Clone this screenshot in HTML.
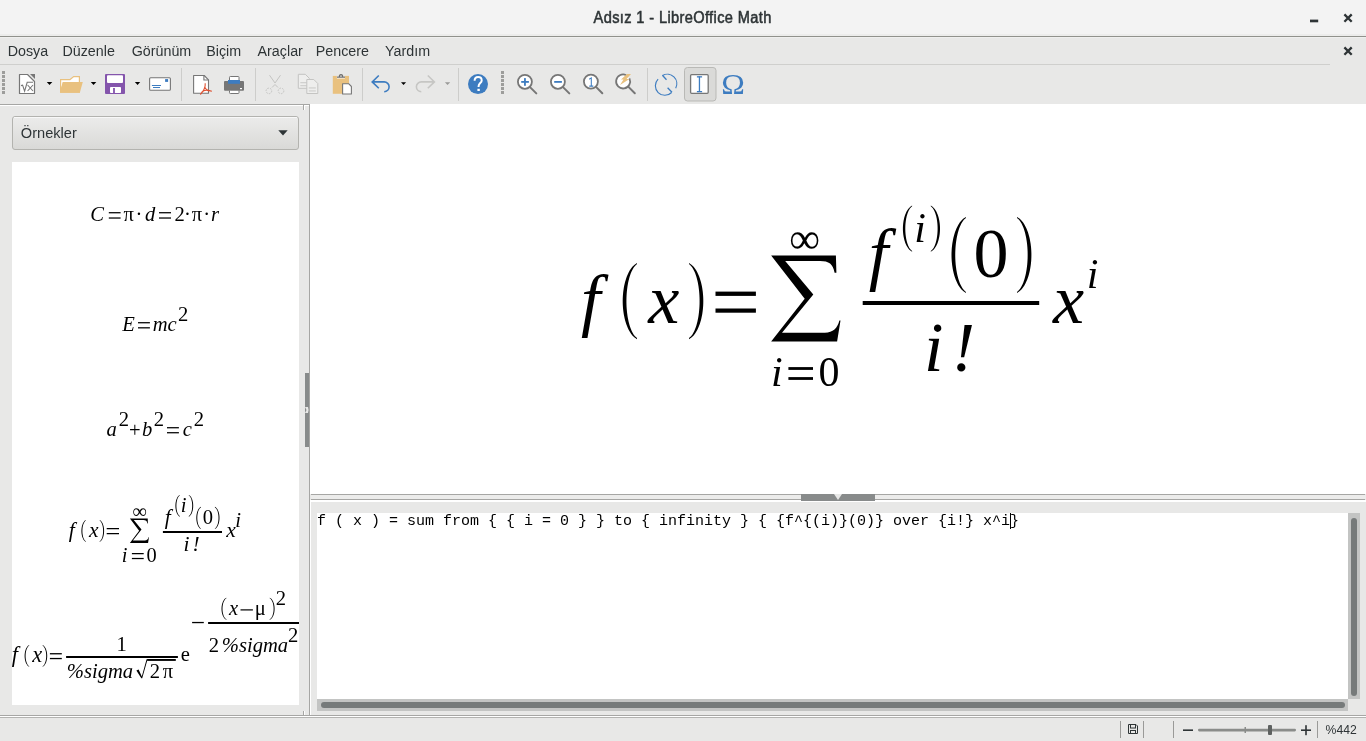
<!DOCTYPE html>
<html><head><meta charset="utf-8"><style>
html,body{margin:0;padding:0;background:#e8e8e7;width:1366px;height:741px;overflow:hidden}
svg{display:block;will-change:transform}
</style></head><body>
<svg width="1366" height="741" viewBox="0 0 1366 741">
<rect x="0" y="0" width="1366" height="741" fill="#e8e8e7"/>
<rect x="0" y="0" width="1366" height="34" fill="#f3f3f3" />
<rect x="0" y="34" width="1366" height="2" fill="#ececeb" />
<rect x="0" y="36" width="1366" height="1" fill="#90918c" />
<rect x="0" y="37" width="1366" height="1" fill="#efefee" />
<text x="0" y="0" transform="translate(593.6,23) scale(1,1.08)" font-family="Liberation Sans" font-size="14.6" letter-spacing="0.37" fill="#2e3436" stroke="#2e3436" stroke-width="0.5">Adsız 1 - LibreOffice Math</text>
<rect x="1310" y="19.6" width="8.2" height="2.7" fill="#2e3436" />
<path d="M1344.4 14.4 L1351.7 21.7 M1351.7 14.4 L1344.4 21.7" stroke="#2e3436" stroke-width="2.3"/>
<text x="0" y="0" transform="translate(7.63,56) scale(1,1.08)" font-family="Liberation Sans" font-size="14.3" font-weight="normal" fill="#2e3436">Dosya</text>
<text x="0" y="0" transform="translate(62.43,56) scale(1,1.08)" font-family="Liberation Sans" font-size="14.3" font-weight="normal" fill="#2e3436">Düzenle</text>
<text x="0" y="0" transform="translate(131.68,56) scale(1,1.08)" font-family="Liberation Sans" font-size="14.3" font-weight="normal" fill="#2e3436">Görünüm</text>
<text x="0" y="0" transform="translate(206.23,56) scale(1,1.08)" font-family="Liberation Sans" font-size="14.3" font-weight="normal" fill="#2e3436">Biçim</text>
<text x="0" y="0" transform="translate(257.57,56) scale(1,1.08)" font-family="Liberation Sans" font-size="14.3" font-weight="normal" fill="#2e3436">Araçlar</text>
<text x="0" y="0" transform="translate(315.73,56) scale(1,1.08)" font-family="Liberation Sans" font-size="14.3" font-weight="normal" fill="#2e3436">Pencere</text>
<text x="0" y="0" transform="translate(385.09,56) scale(1,1.08)" font-family="Liberation Sans" font-size="14.3" font-weight="normal" fill="#2e3436">Yardım</text>
<path d="M1344.4 47.4 L1351.7 54.7 M1351.7 47.4 L1344.4 54.7" stroke="#2e3436" stroke-width="2.3"/>
<rect x="0" y="64" width="1330" height="1" fill="#cfcfcd" />
<rect x="0" y="104" width="310" height="1" fill="#a6a6a4" />
<rect x="0" y="105" width="309" height="1" fill="#ffffff" />
<rect x="2" y="71" width="3" height="3" fill="#9d9d9b" />
<rect x="2" y="75" width="3" height="3" fill="#9d9d9b" />
<rect x="2" y="79" width="3" height="3" fill="#9d9d9b" />
<rect x="2" y="83" width="3" height="3" fill="#9d9d9b" />
<rect x="2" y="87" width="3" height="3" fill="#9d9d9b" />
<rect x="2" y="91" width="3" height="3" fill="#9d9d9b" />
<path d="M19.5 74.5 H27.5 L34.5 81.5 V93.5 H19.5 Z" fill="#fff" stroke="#767676" stroke-width="1.2" stroke-linejoin="round"/>
<path d="M30 74 H35 V79 Z" fill="#767676"/>
<path d="M21 85.6 L22.6 85.2 L24.6 91.2 L27.2 82.3 H33" fill="none" stroke="#767676" stroke-width="1.1"/>
<path d="M27.6 85 L33 91 M33 85 L27.6 91" stroke="#767676" stroke-width="1.1"/>
<path d="M46.8 82 L52.3 82 L49.55 85 Z" fill="#000"/>
<path d="M60 79 H69.8 L73.4 76 H80 V92.8 H60 Z" fill="#e9c17f"/>
<path d="M61.2 80.2 H70.2 L73.8 77.2 H78.8 V82 H62.8 L61.2 88 Z" fill="#fff"/>
<path d="M62.9 82 H82.8 L79.8 92.8 H60 Z" fill="#e9c17f"/>
<path d="M90.8 82 L96.3 82 L93.55 85 Z" fill="#000"/>
<rect x="105" y="74" width="20" height="20" rx="1" fill="#8455ac"/>
<rect x="107" y="75.2" width="16" height="7.7" rx="1" fill="#fff"/>
<rect x="110" y="86.9" width="11" height="6.1" rx="0.8" fill="#fff"/>
<rect x="113.1" y="88" width="1.8" height="6" fill="#8455ac" />
<path d="M134.9 82 L140.20000000000002 82 L137.55 85 Z" fill="#000"/>
<rect x="149.6" y="77.8" width="20.8" height="12.4" rx="1" fill="#fff" stroke="#767676" stroke-width="1.1"/>
<rect x="165.1" y="79.1" width="3" height="2.8" fill="#3d7cc0" />
<rect x="151.9" y="85" width="9.1" height="1" fill="#3d7cc0" />
<rect x="153" y="87" width="7" height="1" fill="#3d7cc0" />
<rect x="181" y="68" width="1" height="33" fill="#cdcdcb" />
<path d="M193.6 75.5 H204.2 L208.5 79.8 V93.3 H193.6 Z" fill="#fff" stroke="#767676" stroke-width="1.1" stroke-linejoin="round"/>
<path d="M203.9 75.5 V80 H208.5" fill="none" stroke="#767676" stroke-width="1.1"/>
<path d="M205.2 83.2 C205.6 87 203.6 91 200.3 94.5 M205 87.5 C205.8 90 208.5 90.8 211.9 91.2 M201.5 92.5 C204 90 206.5 89.8 209 91" fill="none" stroke="#df5030" stroke-width="1.1"/>
<rect x="229.5" y="76.5" width="9.5" height="6" rx="0.8" fill="#fff" stroke="#767676" stroke-width="1"/>
<rect x="228" y="80" width="12" height="3.8" fill="#3d7cc0" />
<rect x="224" y="81" width="20" height="9.7" rx="1" fill="#767676"/>
<rect x="228" y="80" width="12" height="3.8" fill="#3d7cc0" />
<rect x="229.5" y="90.2" width="9.5" height="3.3" rx="0.8" fill="#fff" stroke="#767676" stroke-width="1"/>
<rect x="240" y="88" width="2" height="1.2" fill="#fff" />
<rect x="255" y="68" width="1" height="33" fill="#cdcdcb" />
<path d="M269.5 75.2 L275 83 L280.5 75.2 M272 87.5 L275 84.5 L278 87.5" fill="none" stroke="#c4c4c2" stroke-width="1"/>
<circle cx="268.9" cy="90.9" r="2.8" fill="none" stroke="#c4c4c2" stroke-width="1" stroke-dasharray="1.6 1.2"/>
<circle cx="281" cy="90.9" r="2.8" fill="none" stroke="#c4c4c2" stroke-width="1" stroke-dasharray="1.6 1.2"/>
<path d="M298.3 74.3 H305.3 L309.3 78.3 V88.3 H298.3 Z" fill="#eeeeed" stroke="#c4c4c2" stroke-width="1" stroke-linejoin="round"/>
<rect x="300.3" y="82.3" width="7" height="0.9" fill="#c4c4c2" />
<rect x="300.3" y="85.3" width="7" height="0.9" fill="#c4c4c2" />
<path d="M306.8 79.5 H313.8 L317.8 83.5 V93.5 H306.8 Z" fill="#eeeeed" stroke="#c4c4c2" stroke-width="1" stroke-linejoin="round"/>
<rect x="308.8" y="87.5" width="7" height="0.9" fill="#c4c4c2" />
<rect x="308.8" y="90.5" width="7" height="0.9" fill="#c4c4c2" />
<rect x="332.8" y="75.9" width="16.2" height="17.9" fill="#e9c17f"/>
<rect x="336.9" y="75.9" width="8" height="2.6" fill="#fff" />
<path d="M337 77.2 H345 M339.3 77 C339.3 73.8 342.7 73.8 342.7 77" fill="none" stroke="#6d6d6d" stroke-width="1.2"/>
<path d="M342.6 83.7 H348.6 L351.4 86.5 V94 H342.6 Z" fill="#fff" stroke="#767676" stroke-width="1.1" stroke-linejoin="round"/>
<rect x="362" y="68" width="1" height="33" fill="#cdcdcb" />
<path d="M378.8 75.5 L372.2 81.9 L378.8 88.3 M372.4 81.9 H384.2 A4.9 4.9 0 0 1 384.2 91.7" fill="none" stroke="#3d7cc0" stroke-width="1.6" stroke-linejoin="miter"/>
<path d="M401 82.2 L406.1 82.2 L403.55 85.0 Z" fill="#000"/>
<path d="M427.8 75.5 L434.4 81.9 L427.8 88.3 M434.2 81.9 H421.3 A4.9 4.9 0 0 0 421.3 91.7" fill="none" stroke="#c6c6c4" stroke-width="1.6"/>
<path d="M444.9 82.2 L450.2 82.2 L447.54999999999995 85.0 Z" fill="#9a9a98"/>
<rect x="458" y="68" width="1" height="33" fill="#cdcdcb" />
<circle cx="478" cy="84.1" r="10" fill="#3d7cc0"/>
<path d="M474.6 80.8 C474.6 78.3 476.2 77.1 478.1 77.1 C480.3 77.1 481.7 78.5 481.7 80.4 C481.7 82.9 478.6 83.3 478.6 86.2 V87" fill="none" stroke="#fff" stroke-width="2"/>
<rect x="477.4" y="88.8" width="2.4" height="2.2" fill="#fff" />
<rect x="501" y="71" width="3" height="3" fill="#9d9d9b" />
<rect x="501" y="75" width="3" height="3" fill="#9d9d9b" />
<rect x="501" y="79" width="3" height="3" fill="#9d9d9b" />
<rect x="501" y="83" width="3" height="3" fill="#9d9d9b" />
<rect x="501" y="87" width="3" height="3" fill="#9d9d9b" />
<rect x="501" y="91" width="3" height="3" fill="#9d9d9b" />
<circle cx="524.9" cy="81.8" r="7" fill="#fff" stroke="#767676" stroke-width="1.8"/>
<path d="M530.0 87.1 L536.3 93.39999999999999" stroke="#767676" stroke-width="2" stroke-linecap="round"/>
<rect x="521.2" y="81" width="7.7" height="1.8" fill="#3d7cc0" />
<rect x="524.05" y="78.1" width="1.8" height="7.7" fill="#3d7cc0" />
<circle cx="557.9" cy="81.8" r="7" fill="#fff" stroke="#767676" stroke-width="1.8"/>
<path d="M563.0 87.1 L569.3 93.39999999999999" stroke="#767676" stroke-width="2" stroke-linecap="round"/>
<rect x="554.2" y="81" width="7.7" height="1.8" fill="#3d7cc0" />
<circle cx="590.9" cy="81.6" r="7" fill="#fff" stroke="#767676" stroke-width="1.8"/>
<path d="M596.0 86.89999999999999 L602.3 93.19999999999999" stroke="#767676" stroke-width="2" stroke-linecap="round"/>
<path d="M589.2 79.2 L591.3 77.9 V86.1 M589.3 86.1 H593.3" fill="none" stroke="#3d7cc0" stroke-width="1.05"/>
<path d="M629.4 78.4 A7 7 0 1 1 626.2 75.2" fill="#fff" stroke="#767676" stroke-width="1.8"/>
<path d="M628.5 86.9 L634.8 93.2" stroke="#767676" stroke-width="2" stroke-linecap="round"/>
<path d="M627 74 L631 74 L626.5 79 L629.5 79 L620 85 L623.5 79.5 L621 79.5 Z" fill="#e9c17f"/>
<rect x="647" y="68" width="1" height="33" fill="#cdcdcb" />
<path d="M662.6 75.5 A9.5 9.5 0 0 1 675.7 88.2 M671.6 92.5 A9.5 9.5 0 0 1 658.1 79.1" fill="none" stroke="#3d7cc0" stroke-width="1.15"/>
<path d="M662.4 75.3 L666.5 79.7 M667.6 87.8 L672 92.2" stroke="#3d7cc0" stroke-width="1.3"/>
<rect x="684.5" y="67.5" width="31.5" height="33.5" rx="3" fill="#dadad8" stroke="#b9b9b6"/>
<rect x="690.6" y="74.7" width="17.6" height="18.6" rx="1" fill="#fff" stroke="#767676" stroke-width="1.3"/>
<rect x="698.8" y="76.4" width="1.3" height="15.4" fill="#3d7cc0" />
<rect x="696.9" y="76.2" width="5.2" height="1.3" fill="#3d7cc0" />
<rect x="696.9" y="91" width="5.2" height="1.3" fill="#3d7cc0" />
<text x="0" y="0" font-family="Liberation Serif" font-size="30.21" fill="#3d7cc0" transform="translate(721.16,94) scale(1.0506,1)" >Ω</text>
<rect x="309" y="104" width="1" height="612" fill="#a6a6a4" />
<rect x="303" y="104" width="1" height="6" fill="#a6a6a4" />
<rect x="304" y="105" width="1" height="5" fill="#ffffff" />
<defs><linearGradient id="btn" x1="0" y1="0" x2="0" y2="1"><stop offset="0" stop-color="#ececeb"/><stop offset="1" stop-color="#d9d9d7"/></linearGradient></defs>
<rect x="12.5" y="116.5" width="286" height="33" rx="2.5" fill="url(#btn)" stroke="#b3b3af"/>
<rect x="14" y="117" width="283" height="1" fill="#f8f8f8" />
<text x="0" y="0" transform="translate(20.81,138) scale(1,1.03)" font-family="Liberation Sans" font-size="14.6" font-weight="normal" fill="#2e3436">Örnekler</text>
<path d="M278.3 130.3 L287.7 130.3 L283 135.6 Z" fill="#2e3436"/>
<rect x="12" y="162" width="287" height="543" fill="#ffffff" />
<rect x="305" y="373" width="4" height="74" fill="#888b8b" />
<path d="M305 407 L308 407 L308.6 410 L308 413 L305 413 L306.5 410 Z" fill="#e8e8e7"/>
<rect x="310" y="104" width="1056" height="390" fill="#ffffff" />
<rect x="311" y="494" width="1054" height="1" fill="#a6a6a4" />
<rect x="311" y="495" width="1055" height="4" fill="#ececeb" />
<rect x="311" y="499" width="1054" height="1" fill="#a6a6a4" />
<rect x="311" y="500" width="1055" height="2" fill="#ffffff" />
<rect x="310" y="500" width="1" height="215" fill="#ffffff" />
<rect x="801" y="494" width="74" height="7" fill="#888b8b" />
<path d="M834 494 L842 494 L838 500 Z" fill="#e8e8e7"/>
<rect x="317" y="513" width="1031" height="186" fill="#ffffff" />
<rect x="1348" y="513" width="12" height="186" fill="#c3c4c3" />
<rect x="1351" y="518" width="6" height="178" rx="3" fill="#767a7a"/>
<rect x="317" y="699" width="1031" height="12" fill="#c3c4c3" />
<rect x="321" y="702" width="1024" height="6" rx="3" fill="#767a7a"/>
<text x="317" y="525" font-family="Liberation Mono" font-size="15" font-weight="normal" font-style="normal" fill="#000000" xml:space="preserve">f ( x ) = sum from { { i = 0 } } to { infinity } { {f^{(i)}(0)} over {i!} x^i}</text>
<rect x="1010" y="513" width="1" height="16" fill="#000" />
<rect x="0" y="715" width="1366" height="1" fill="#a6a6a4" />
<rect x="0" y="716" width="1366" height="1" fill="#ffffff" />
<rect x="0" y="717" width="1366" height="1" fill="#b3b3b1" />
<rect x="303" y="711" width="1" height="4" fill="#a6a6a4" />
<rect x="304" y="711" width="1" height="4" fill="#ffffff" />
<rect x="1120" y="721" width="1" height="17" fill="#9a9a98" />
<rect x="1143" y="721" width="1" height="17" fill="#9a9a98" />
<rect x="1173" y="721" width="1" height="17" fill="#9a9a98" />
<rect x="1317" y="721" width="1" height="17" fill="#9a9a98" />
<text x="0" y="0" transform="translate(1325.57,734) scale(1,1.05)" font-family="Liberation Sans" font-size="12.2" font-weight="normal" fill="#2e3436">%442</text>
<path d="M1128.5 724.5 H1136 L1137.5 726 V733.5 H1128.5 Z" fill="none" stroke="#2e3436" stroke-width="1"/>
<rect x="1130.5" y="724.5" width="5" height="3.5" fill="none" stroke="#2e3436" stroke-width="1"/>
<rect x="1130.5" y="730.5" width="5" height="3" fill="none" stroke="#2e3436" stroke-width="1"/>
<rect x="1183" y="729.4" width="10" height="1.6" fill="#2e3436" />
<rect x="1198" y="728.8" width="98" height="2.6" rx="1.3" fill="#8a8c8a"/>
<rect x="1244.5" y="727" width="1.5" height="6" fill="#8a8c8a" />
<rect x="1268" y="725" width="4" height="10" rx="1" fill="#5e6160"/>
<rect x="1301" y="729.4" width="10" height="1.6" fill="#2e3436" />
<rect x="1305.2" y="725.2" width="1.6" height="10" fill="#2e3436" />
<text x="581.11" y="323" font-family="Liberation Serif" font-size="70" font-weight="normal" font-style="italic" fill="#000" >f</text>
<path d="M637.00 263.00 L634.24 264.90 L632.36 266.81 L630.88 268.71 L629.66 270.62 L628.62 272.52 L627.71 274.43 L626.92 276.33 L626.22 278.24 L625.61 280.14 L625.06 282.05 L624.59 283.95 L624.18 285.86 L623.82 287.76 L623.52 289.67 L623.26 291.57 L623.06 293.48 L622.90 295.38 L622.79 297.29 L622.72 299.19 L622.70 301.10 L622.72 303.00 L622.79 304.91 L622.90 306.81 L623.06 308.72 L623.26 310.62 L623.52 312.53 L623.82 314.44 L624.18 316.34 L624.59 318.25 L625.06 320.15 L625.61 322.06 L626.22 323.96 L626.92 325.87 L627.71 327.77 L628.62 329.68 L629.66 331.58 L630.88 333.49 L632.36 335.39 L634.24 337.30 L637.00 339.20 L637.00 338.08 L634.97 336.24 L633.58 334.39 L632.49 332.54 L631.58 330.69 L630.81 328.84 L630.13 326.99 L629.55 325.14 L629.03 323.29 L628.57 321.44 L628.17 319.59 L627.82 317.74 L627.51 315.89 L627.25 314.04 L627.02 312.20 L626.84 310.35 L626.68 308.50 L626.57 306.65 L626.48 304.80 L626.43 302.95 L626.42 301.10 L626.43 299.25 L626.48 297.40 L626.57 295.55 L626.68 293.70 L626.84 291.85 L627.02 290.00 L627.25 288.16 L627.51 286.31 L627.82 284.46 L628.17 282.61 L628.57 280.76 L629.03 278.91 L629.55 277.06 L630.13 275.21 L630.81 273.36 L631.58 271.51 L632.49 269.66 L633.58 267.81 L634.97 265.96 L637.00 264.12 Z" fill="#000"/>
<text x="648.25" y="323" font-family="Liberation Serif" font-size="70" font-weight="normal" font-style="italic" fill="#000" >x</text>
<path d="M689.00 263.00 L691.76 264.90 L693.64 266.81 L695.12 268.71 L696.34 270.62 L697.38 272.52 L698.29 274.43 L699.08 276.33 L699.78 278.24 L700.39 280.14 L700.94 282.05 L701.41 283.95 L701.82 285.86 L702.18 287.76 L702.48 289.67 L702.74 291.57 L702.94 293.48 L703.10 295.38 L703.21 297.29 L703.28 299.19 L703.30 301.10 L703.28 303.00 L703.21 304.91 L703.10 306.81 L702.94 308.72 L702.74 310.62 L702.48 312.53 L702.18 314.44 L701.82 316.34 L701.41 318.25 L700.94 320.15 L700.39 322.06 L699.78 323.96 L699.08 325.87 L698.29 327.77 L697.38 329.68 L696.34 331.58 L695.12 333.49 L693.64 335.39 L691.76 337.30 L689.00 339.20 L689.00 338.08 L691.03 336.24 L692.42 334.39 L693.51 332.54 L694.42 330.69 L695.19 328.84 L695.87 326.99 L696.45 325.14 L696.97 323.29 L697.43 321.44 L697.83 319.59 L698.18 317.74 L698.49 315.89 L698.75 314.04 L698.98 312.20 L699.16 310.35 L699.32 308.50 L699.43 306.65 L699.52 304.80 L699.57 302.95 L699.58 301.10 L699.57 299.25 L699.52 297.40 L699.43 295.55 L699.32 293.70 L699.16 291.85 L698.98 290.00 L698.75 288.16 L698.49 286.31 L698.18 284.46 L697.83 282.61 L697.43 280.76 L696.97 278.91 L696.45 277.06 L695.87 275.21 L695.19 273.36 L694.42 271.51 L693.51 269.66 L692.42 267.81 L691.03 265.96 L689.00 264.12 Z" fill="#000"/>
<rect x="715.5" y="291.6" width="40.4" height="4.3" fill="#000" />
<rect x="715.5" y="308.5" width="40.4" height="4.2" fill="#000" />
<path d="M771.15 255.4 L835.9 255.4 L836.4 272.8 L834.6 272.8 C833 264 829 261 820 261 L785.2 261 L813.3 294.6 L782 332.7 L824.9 332.7 C833 332.7 837.5 328 839.4 320.5 L840.5 320.5 L837.1 341.6 L771.15 341.6 L804.7 298.7 Z" fill="#000"/>
<text x="789.28" y="252.77777777777777" font-family="Liberation Serif" font-size="43.157088122605366" font-weight="normal" font-style="normal" fill="#000" >∞</text>
<text x="770.96" y="385.8" font-family="Liberation Serif" font-size="42" font-weight="normal" font-style="italic" fill="#000" >i</text>
<rect x="788.4" y="367.1" width="24.6" height="2.8" fill="#000" />
<rect x="788.4" y="377.1" width="24.6" height="2.8" fill="#000" />
<text x="818.60" y="386.22" font-family="Liberation Serif" font-size="42" font-weight="normal" font-style="normal" fill="#000" >0</text>
<text x="868.81" y="277" font-family="Liberation Serif" font-size="70" font-weight="normal" font-style="italic" fill="#000" >f</text>
<path d="M912.10 205.60 L910.32 206.75 L909.12 207.91 L908.17 209.06 L907.38 210.21 L906.71 211.36 L906.12 212.51 L905.61 213.67 L905.16 214.82 L904.77 215.97 L904.42 217.12 L904.12 218.28 L903.85 219.43 L903.62 220.58 L903.42 221.73 L903.26 222.89 L903.13 224.04 L903.03 225.19 L902.96 226.34 L902.91 227.50 L902.90 228.65 L902.91 229.80 L902.96 230.95 L903.03 232.11 L903.13 233.26 L903.26 234.41 L903.42 235.56 L903.62 236.72 L903.85 237.87 L904.12 239.02 L904.42 240.18 L904.77 241.33 L905.16 242.48 L905.61 243.63 L906.12 244.78 L906.71 245.94 L907.38 247.09 L908.17 248.24 L909.12 249.39 L910.32 250.55 L912.10 251.70 L912.10 250.98 L910.79 249.87 L909.90 248.75 L909.20 247.63 L908.61 246.52 L908.12 245.40 L907.68 244.28 L907.31 243.17 L906.97 242.05 L906.68 240.93 L906.42 239.82 L906.19 238.70 L906.00 237.58 L905.83 236.47 L905.68 235.35 L905.56 234.23 L905.46 233.12 L905.39 232.00 L905.33 230.88 L905.30 229.77 L905.29 228.65 L905.30 227.53 L905.33 226.42 L905.39 225.30 L905.46 224.18 L905.56 223.07 L905.68 221.95 L905.83 220.83 L906.00 219.72 L906.19 218.60 L906.42 217.48 L906.68 216.37 L906.97 215.25 L907.31 214.13 L907.68 213.02 L908.12 211.90 L908.61 210.78 L909.20 209.67 L909.90 208.55 L910.79 207.43 L912.10 206.32 Z" fill="#000"/>
<text x="914.36" y="242" font-family="Liberation Serif" font-size="42" font-weight="normal" font-style="italic" fill="#000" >i</text>
<path d="M930.80 205.60 L932.58 206.75 L933.78 207.91 L934.73 209.06 L935.52 210.21 L936.19 211.36 L936.78 212.51 L937.29 213.67 L937.74 214.82 L938.13 215.97 L938.48 217.12 L938.78 218.28 L939.05 219.43 L939.28 220.58 L939.48 221.73 L939.64 222.89 L939.77 224.04 L939.87 225.19 L939.94 226.34 L939.99 227.50 L940.00 228.65 L939.99 229.80 L939.94 230.95 L939.87 232.11 L939.77 233.26 L939.64 234.41 L939.48 235.56 L939.28 236.72 L939.05 237.87 L938.78 239.02 L938.48 240.18 L938.13 241.33 L937.74 242.48 L937.29 243.63 L936.78 244.78 L936.19 245.94 L935.52 247.09 L934.73 248.24 L933.78 249.39 L932.58 250.55 L930.80 251.70 L930.80 250.98 L932.11 249.87 L933.00 248.75 L933.70 247.63 L934.29 246.52 L934.78 245.40 L935.22 244.28 L935.59 243.17 L935.93 242.05 L936.22 240.93 L936.48 239.82 L936.71 238.70 L936.90 237.58 L937.07 236.47 L937.22 235.35 L937.34 234.23 L937.44 233.12 L937.51 232.00 L937.57 230.88 L937.60 229.77 L937.61 228.65 L937.60 227.53 L937.57 226.42 L937.51 225.30 L937.44 224.18 L937.34 223.07 L937.22 221.95 L937.07 220.83 L936.90 219.72 L936.71 218.60 L936.48 217.48 L936.22 216.37 L935.93 215.25 L935.59 214.13 L935.22 213.02 L934.78 211.90 L934.29 210.78 L933.70 209.67 L933.00 208.55 L932.11 207.43 L930.80 206.32 Z" fill="#000"/>
<path d="M965.90 216.90 L963.12 218.80 L961.23 220.71 L959.74 222.61 L958.51 224.51 L957.46 226.41 L956.55 228.31 L955.75 230.22 L955.04 232.12 L954.43 234.02 L953.88 235.93 L953.40 237.83 L952.99 239.73 L952.63 241.63 L952.32 243.53 L952.07 245.44 L951.86 247.34 L951.70 249.24 L951.59 251.15 L951.52 253.05 L951.50 254.95 L951.52 256.85 L951.59 258.75 L951.70 260.66 L951.86 262.56 L952.07 264.46 L952.32 266.37 L952.63 268.27 L952.99 270.17 L953.40 272.07 L953.88 273.98 L954.43 275.88 L955.04 277.78 L955.75 279.68 L956.55 281.58 L957.46 283.49 L958.51 285.39 L959.74 287.29 L961.23 289.19 L963.12 291.10 L965.90 293.00 L965.90 291.88 L963.85 290.03 L962.46 288.18 L961.36 286.34 L960.44 284.49 L959.66 282.65 L958.99 280.80 L958.39 278.95 L957.87 277.11 L957.41 275.26 L957.01 273.41 L956.66 271.57 L956.35 269.72 L956.08 267.87 L955.85 266.03 L955.66 264.18 L955.51 262.34 L955.39 260.49 L955.31 258.64 L955.26 256.80 L955.24 254.95 L955.26 253.10 L955.31 251.26 L955.39 249.41 L955.51 247.56 L955.66 245.72 L955.85 243.87 L956.08 242.03 L956.35 240.18 L956.66 238.33 L957.01 236.49 L957.41 234.64 L957.87 232.79 L958.39 230.95 L958.99 229.10 L959.66 227.25 L960.44 225.41 L961.36 223.56 L962.46 221.72 L963.85 219.87 L965.90 218.02 Z" fill="#000"/>
<text x="973.53" y="277" font-family="Liberation Serif" font-size="70" font-weight="normal" font-style="normal" fill="#000" >0</text>
<path d="M1017.00 216.90 L1019.78 218.80 L1021.67 220.71 L1023.16 222.61 L1024.39 224.51 L1025.44 226.41 L1026.35 228.31 L1027.15 230.22 L1027.86 232.12 L1028.47 234.02 L1029.02 235.93 L1029.50 237.83 L1029.91 239.73 L1030.27 241.63 L1030.58 243.53 L1030.83 245.44 L1031.04 247.34 L1031.20 249.24 L1031.31 251.15 L1031.38 253.05 L1031.40 254.95 L1031.38 256.85 L1031.31 258.75 L1031.20 260.66 L1031.04 262.56 L1030.83 264.46 L1030.58 266.37 L1030.27 268.27 L1029.91 270.17 L1029.50 272.07 L1029.02 273.98 L1028.47 275.88 L1027.86 277.78 L1027.15 279.68 L1026.35 281.58 L1025.44 283.49 L1024.39 285.39 L1023.16 287.29 L1021.67 289.19 L1019.78 291.10 L1017.00 293.00 L1017.00 291.88 L1019.05 290.03 L1020.44 288.18 L1021.54 286.34 L1022.46 284.49 L1023.24 282.65 L1023.91 280.80 L1024.51 278.95 L1025.03 277.11 L1025.49 275.26 L1025.89 273.41 L1026.24 271.57 L1026.55 269.72 L1026.82 267.87 L1027.05 266.03 L1027.24 264.18 L1027.39 262.34 L1027.51 260.49 L1027.59 258.64 L1027.64 256.80 L1027.66 254.95 L1027.64 253.10 L1027.59 251.26 L1027.51 249.41 L1027.39 247.56 L1027.24 245.72 L1027.05 243.87 L1026.82 242.03 L1026.55 240.18 L1026.24 238.33 L1025.89 236.49 L1025.49 234.64 L1025.03 232.79 L1024.51 230.95 L1023.91 229.10 L1023.24 227.25 L1022.46 225.41 L1021.54 223.56 L1020.44 221.72 L1019.05 219.87 L1017.00 218.02 Z" fill="#000"/>
<rect x="862.7" y="301" width="176.5" height="4" fill="#000" />
<text x="924.10" y="370.7" font-family="Liberation Serif" font-size="70" font-weight="normal" font-style="italic" fill="#000" >i</text>
<text x="951.70" y="370.62" font-family="Liberation Serif" font-size="70" font-weight="normal" font-style="italic" fill="#000" >!</text>
<text x="1053.05" y="322.8" font-family="Liberation Serif" font-size="70" font-weight="normal" font-style="italic" fill="#000" >x</text>
<text x="1086.66" y="288" font-family="Liberation Serif" font-size="42" font-weight="normal" font-style="italic" fill="#000" >i</text>
<defs><clipPath id="sbclip"><rect x="12" y="162" width="287" height="543"/></clipPath></defs>
<g clip-path="url(#sbclip)">
<text x="90.35" y="220.9" font-family="Liberation Serif" font-size="20.6" font-weight="normal" font-style="italic" fill="#000" >C</text>
<rect x="108.8" y="212.1" width="11.799999999999997" height="1.25" fill="#000" />
<rect x="108.8" y="217.4" width="11.799999999999997" height="1.25" fill="#000" />
<text x="123.62" y="221.106" font-family="Liberation Serif" font-size="20.6" font-weight="normal" font-style="normal" fill="#000" >π</text>
<text x="135.59" y="220.9" font-family="Liberation Serif" font-size="20.6" font-weight="normal" font-style="normal" fill="#000" >·</text>
<text x="145.08" y="221.106" font-family="Liberation Serif" font-size="20.6" font-weight="normal" font-style="italic" fill="#000" >d</text>
<rect x="159" y="212.1" width="12" height="1.25" fill="#000" />
<rect x="159" y="217.4" width="12" height="1.25" fill="#000" />
<text x="174.59" y="220.9" font-family="Liberation Serif" font-size="20.6" font-weight="normal" font-style="normal" fill="#000" >2</text>
<text x="183.99" y="220.9" font-family="Liberation Serif" font-size="20.6" font-weight="normal" font-style="normal" fill="#000" >·</text>
<text x="191.72" y="221.106" font-family="Liberation Serif" font-size="20.6" font-weight="normal" font-style="normal" fill="#000" >π</text>
<text x="203.29" y="220.9" font-family="Liberation Serif" font-size="20.6" font-weight="normal" font-style="normal" fill="#000" >·</text>
<text x="210.97" y="220.9" font-family="Liberation Serif" font-size="20.6" font-weight="normal" font-style="italic" fill="#000" >r</text>
<text x="122.14" y="331" font-family="Liberation Serif" font-size="20.6" font-weight="normal" font-style="italic" fill="#000" >E</text>
<rect x="138" y="322.1" width="11.900000000000006" height="1.25" fill="#000" />
<rect x="138" y="327.2" width="11.900000000000006" height="1.25" fill="#000" />
<text x="152.76" y="331" font-family="Liberation Serif" font-size="20.6" font-weight="normal" font-style="italic" fill="#000" >mc</text>
<text x="177.89" y="321.1" font-family="Liberation Serif" font-size="20.6" font-weight="normal" font-style="normal" fill="#000" >2</text>
<text x="106.59" y="435.9" font-family="Liberation Serif" font-size="20.6" font-weight="normal" font-style="italic" fill="#000" >a</text>
<text x="118.79" y="426.1" font-family="Liberation Serif" font-size="20.6" font-weight="normal" font-style="normal" fill="#000" >2</text>
<text x="128.97" y="437.0394" font-family="Liberation Serif" font-size="20.6" font-weight="normal" font-style="normal" fill="#000" >+</text>
<text x="141.94" y="435.9" font-family="Liberation Serif" font-size="20.6" font-weight="normal" font-style="italic" fill="#000" >b</text>
<text x="153.79" y="426.1" font-family="Liberation Serif" font-size="20.6" font-weight="normal" font-style="normal" fill="#000" >2</text>
<rect x="167" y="427.1" width="11.900000000000006" height="1.25" fill="#000" />
<rect x="167" y="432.1" width="11.900000000000006" height="1.25" fill="#000" />
<text x="182.67" y="435.9" font-family="Liberation Serif" font-size="20.6" font-weight="normal" font-style="italic" fill="#000" >c</text>
<text x="193.69" y="426.1" font-family="Liberation Serif" font-size="20.6" font-weight="normal" font-style="normal" fill="#000" >2</text>
<text x="68.66" y="537" font-family="Liberation Serif" font-size="21.5" font-weight="normal" font-style="italic" fill="#000" >f</text>
<path d="M85.80 520.00 L84.95 520.55 L84.37 521.10 L83.92 521.64 L83.54 522.19 L83.22 522.74 L82.94 523.28 L82.70 523.83 L82.48 524.38 L82.29 524.93 L82.13 525.48 L81.98 526.02 L81.85 526.57 L81.74 527.12 L81.65 527.66 L81.57 528.21 L81.51 528.76 L81.46 529.31 L81.43 529.86 L81.41 530.40 L81.40 530.95 L81.41 531.50 L81.43 532.04 L81.46 532.59 L81.51 533.14 L81.57 533.69 L81.65 534.24 L81.74 534.78 L81.85 535.33 L81.98 535.88 L82.13 536.42 L82.29 536.97 L82.48 537.52 L82.70 538.07 L82.94 538.62 L83.22 539.16 L83.54 539.71 L83.92 540.26 L84.37 540.80 L84.95 541.35 L85.80 541.90 L85.80 541.30 L85.15 540.78 L84.70 540.26 L84.35 539.75 L84.06 539.23 L83.81 538.71 L83.60 538.19 L83.41 537.68 L83.24 537.16 L83.09 536.64 L82.96 536.12 L82.85 535.61 L82.75 535.09 L82.67 534.57 L82.59 534.05 L82.53 533.54 L82.49 533.02 L82.45 532.50 L82.42 531.98 L82.41 531.47 L82.40 530.95 L82.41 530.43 L82.42 529.91 L82.45 529.40 L82.49 528.88 L82.53 528.36 L82.59 527.84 L82.67 527.33 L82.75 526.81 L82.85 526.29 L82.96 525.77 L83.09 525.26 L83.24 524.74 L83.41 524.22 L83.60 523.70 L83.81 523.19 L84.06 522.67 L84.35 522.15 L84.70 521.63 L85.15 521.12 L85.80 520.60 Z" fill="#000"/>
<text x="89.06" y="537" font-family="Liberation Serif" font-size="21.5" font-weight="normal" font-style="italic" fill="#000" >x</text>
<path d="M99.70 520.00 L100.55 520.55 L101.13 521.10 L101.58 521.64 L101.96 522.19 L102.28 522.74 L102.56 523.28 L102.80 523.83 L103.02 524.38 L103.21 524.93 L103.37 525.48 L103.52 526.02 L103.65 526.57 L103.76 527.12 L103.85 527.66 L103.93 528.21 L103.99 528.76 L104.04 529.31 L104.07 529.86 L104.09 530.40 L104.10 530.95 L104.09 531.50 L104.07 532.04 L104.04 532.59 L103.99 533.14 L103.93 533.69 L103.85 534.24 L103.76 534.78 L103.65 535.33 L103.52 535.88 L103.37 536.42 L103.21 536.97 L103.02 537.52 L102.80 538.07 L102.56 538.62 L102.28 539.16 L101.96 539.71 L101.58 540.26 L101.13 540.80 L100.55 541.35 L99.70 541.90 L99.70 541.30 L100.35 540.78 L100.80 540.26 L101.15 539.75 L101.44 539.23 L101.69 538.71 L101.90 538.19 L102.09 537.68 L102.26 537.16 L102.41 536.64 L102.54 536.12 L102.65 535.61 L102.75 535.09 L102.83 534.57 L102.91 534.05 L102.97 533.54 L103.01 533.02 L103.05 532.50 L103.08 531.98 L103.09 531.47 L103.10 530.95 L103.09 530.43 L103.08 529.91 L103.05 529.40 L103.01 528.88 L102.97 528.36 L102.91 527.84 L102.83 527.33 L102.75 526.81 L102.65 526.29 L102.54 525.77 L102.41 525.26 L102.26 524.74 L102.09 524.22 L101.90 523.70 L101.69 523.19 L101.44 522.67 L101.15 522.15 L100.80 521.63 L100.35 521.12 L99.70 520.60 Z" fill="#000"/>
<rect x="106.7" y="528" width="12.299999999999997" height="1.25" fill="#000" />
<rect x="106.7" y="533" width="12.299999999999997" height="1.25" fill="#000" />
<path d="M129.90 518.50 L147.73 518.50 L147.87 523.43 L147.38 523.43 C146.93 520.93 145.83 520.09 143.35 520.09 L133.77 520.09 L141.51 529.60 L132.89 540.38 L144.70 540.38 C146.93 540.38 148.17 539.05 148.70 536.93 L149.00 536.93 L148.06 542.90 L129.90 542.90 L139.14 530.76 Z" fill="#000"/>
<text x="132.24" y="518.0066666666667" font-family="Liberation Serif" font-size="20.244597701149427" font-weight="normal" font-style="normal" fill="#000" >∞</text>
<text x="121.76" y="561.6" font-family="Liberation Serif" font-size="20.4" font-weight="normal" font-style="italic" fill="#000" >i</text>
<rect x="131.9" y="553" width="11.799999999999983" height="1.25" fill="#000" />
<rect x="131.9" y="557.9" width="11.799999999999983" height="1.25" fill="#000" />
<text x="146.52" y="561.8000000000001" font-family="Liberation Serif" font-size="20.4" font-weight="normal" font-style="normal" fill="#000" >0</text>
<text x="164.76" y="524.4" font-family="Liberation Serif" font-size="21.5" font-weight="normal" font-style="italic" fill="#000" >f</text>
<path d="M179.80 494.90 L178.95 495.44 L178.37 495.99 L177.92 496.53 L177.54 497.08 L177.22 497.62 L176.94 498.17 L176.70 498.71 L176.48 499.26 L176.29 499.80 L176.13 500.35 L175.98 500.89 L175.85 501.44 L175.74 501.98 L175.65 502.53 L175.57 503.07 L175.51 503.62 L175.46 504.16 L175.43 504.71 L175.41 505.25 L175.40 505.80 L175.41 506.34 L175.43 506.89 L175.46 507.44 L175.51 507.98 L175.57 508.52 L175.65 509.07 L175.74 509.61 L175.85 510.16 L175.98 510.70 L176.13 511.25 L176.29 511.79 L176.48 512.34 L176.70 512.88 L176.94 513.43 L177.22 513.98 L177.54 514.52 L177.92 515.06 L178.37 515.61 L178.95 516.15 L179.80 516.70 L179.80 516.10 L179.15 515.58 L178.70 515.07 L178.35 514.55 L178.06 514.04 L177.81 513.52 L177.60 513.01 L177.41 512.49 L177.24 511.98 L177.09 511.46 L176.97 510.95 L176.85 510.43 L176.75 509.92 L176.67 509.40 L176.59 508.89 L176.53 508.37 L176.49 507.86 L176.45 507.34 L176.42 506.83 L176.41 506.31 L176.40 505.80 L176.41 505.28 L176.42 504.77 L176.45 504.25 L176.49 503.74 L176.53 503.22 L176.59 502.71 L176.67 502.19 L176.75 501.68 L176.85 501.16 L176.97 500.65 L177.09 500.13 L177.24 499.62 L177.41 499.10 L177.60 498.59 L177.81 498.07 L178.06 497.56 L178.35 497.04 L178.70 496.53 L179.15 496.01 L179.80 495.50 Z" fill="#000"/>
<text x="180.75" y="511.8" font-family="Liberation Serif" font-size="20.6" font-weight="normal" font-style="italic" fill="#000" >i</text>
<path d="M188.80 494.90 L189.65 495.44 L190.23 495.99 L190.68 496.53 L191.06 497.08 L191.38 497.62 L191.66 498.17 L191.90 498.71 L192.12 499.26 L192.31 499.80 L192.47 500.35 L192.62 500.89 L192.75 501.44 L192.86 501.98 L192.95 502.53 L193.03 503.07 L193.09 503.62 L193.14 504.16 L193.17 504.71 L193.19 505.25 L193.20 505.80 L193.19 506.34 L193.17 506.89 L193.14 507.44 L193.09 507.98 L193.03 508.52 L192.95 509.07 L192.86 509.61 L192.75 510.16 L192.62 510.70 L192.47 511.25 L192.31 511.79 L192.12 512.34 L191.90 512.88 L191.66 513.43 L191.38 513.98 L191.06 514.52 L190.68 515.06 L190.23 515.61 L189.65 516.15 L188.80 516.70 L188.80 516.10 L189.45 515.58 L189.90 515.07 L190.25 514.55 L190.54 514.04 L190.79 513.52 L191.00 513.01 L191.19 512.49 L191.36 511.98 L191.51 511.46 L191.63 510.95 L191.75 510.43 L191.85 509.92 L191.93 509.40 L192.01 508.89 L192.07 508.37 L192.11 507.86 L192.15 507.34 L192.18 506.83 L192.19 506.31 L192.20 505.80 L192.19 505.28 L192.18 504.77 L192.15 504.25 L192.11 503.74 L192.07 503.22 L192.01 502.71 L191.93 502.19 L191.85 501.68 L191.75 501.16 L191.63 500.65 L191.51 500.13 L191.36 499.62 L191.19 499.10 L191.00 498.59 L190.79 498.07 L190.54 497.56 L190.25 497.04 L189.90 496.53 L189.45 496.01 L188.80 495.50 Z" fill="#000"/>
<path d="M200.90 506.80 L200.01 507.36 L199.41 507.91 L198.93 508.47 L198.54 509.02 L198.20 509.57 L197.91 510.13 L197.66 510.69 L197.43 511.24 L197.23 511.80 L197.06 512.35 L196.91 512.90 L196.77 513.46 L196.66 514.01 L196.56 514.57 L196.48 515.12 L196.42 515.68 L196.36 516.24 L196.33 516.79 L196.31 517.35 L196.30 517.90 L196.31 518.46 L196.33 519.01 L196.36 519.57 L196.42 520.12 L196.48 520.67 L196.56 521.23 L196.66 521.78 L196.77 522.34 L196.91 522.89 L197.06 523.45 L197.23 524.00 L197.43 524.56 L197.66 525.12 L197.91 525.67 L198.20 526.23 L198.54 526.78 L198.93 527.34 L199.41 527.89 L200.01 528.45 L200.90 529.00 L200.90 528.40 L200.21 527.88 L199.74 527.35 L199.37 526.82 L199.06 526.30 L198.80 525.77 L198.57 525.25 L198.37 524.73 L198.19 524.20 L198.04 523.67 L197.90 523.15 L197.78 522.62 L197.67 522.10 L197.58 521.57 L197.51 521.05 L197.44 520.52 L197.39 520.00 L197.35 519.48 L197.32 518.95 L197.31 518.42 L197.30 517.90 L197.31 517.38 L197.32 516.85 L197.35 516.32 L197.39 515.80 L197.44 515.27 L197.51 514.75 L197.58 514.23 L197.67 513.70 L197.78 513.17 L197.90 512.65 L198.04 512.12 L198.19 511.60 L198.37 511.07 L198.57 510.55 L198.80 510.02 L199.06 509.50 L199.37 508.97 L199.74 508.45 L200.21 507.92 L200.90 507.40 Z" fill="#000"/>
<text x="202.72" y="523.8" font-family="Liberation Serif" font-size="20.6" font-weight="normal" font-style="normal" fill="#000" >0</text>
<path d="M214.90 506.80 L215.79 507.36 L216.39 507.91 L216.87 508.47 L217.26 509.02 L217.60 509.57 L217.89 510.13 L218.14 510.69 L218.37 511.24 L218.57 511.80 L218.74 512.35 L218.89 512.90 L219.03 513.46 L219.14 514.01 L219.24 514.57 L219.32 515.12 L219.38 515.68 L219.44 516.24 L219.47 516.79 L219.49 517.35 L219.50 517.90 L219.49 518.46 L219.47 519.01 L219.44 519.57 L219.38 520.12 L219.32 520.67 L219.24 521.23 L219.14 521.78 L219.03 522.34 L218.89 522.89 L218.74 523.45 L218.57 524.00 L218.37 524.56 L218.14 525.12 L217.89 525.67 L217.60 526.23 L217.26 526.78 L216.87 527.34 L216.39 527.89 L215.79 528.45 L214.90 529.00 L214.90 528.40 L215.59 527.88 L216.06 527.35 L216.43 526.82 L216.74 526.30 L217.00 525.77 L217.23 525.25 L217.43 524.73 L217.61 524.20 L217.76 523.67 L217.90 523.15 L218.02 522.62 L218.13 522.10 L218.22 521.57 L218.29 521.05 L218.36 520.52 L218.41 520.00 L218.45 519.48 L218.48 518.95 L218.49 518.42 L218.50 517.90 L218.49 517.38 L218.48 516.85 L218.45 516.32 L218.41 515.80 L218.36 515.27 L218.29 514.75 L218.22 514.23 L218.13 513.70 L218.02 513.17 L217.90 512.65 L217.76 512.12 L217.61 511.60 L217.43 511.07 L217.23 510.55 L217.00 510.02 L216.74 509.50 L216.43 508.97 L216.06 508.45 L215.59 507.92 L214.90 507.40 Z" fill="#000"/>
<rect x="162.9" y="531" width="59.1" height="2" fill="#000" />
<text x="183.50" y="551" font-family="Liberation Serif" font-size="21.5" font-weight="normal" font-style="italic" fill="#000" >i</text>
<text x="192.44" y="551.3" font-family="Liberation Serif" font-size="21.5" font-weight="normal" font-style="italic" fill="#000" >!</text>
<text x="226.16" y="536.8" font-family="Liberation Serif" font-size="21.5" font-weight="normal" font-style="italic" fill="#000" >x</text>
<text x="235.25" y="526.5" font-family="Liberation Serif" font-size="20.6" font-weight="normal" font-style="italic" fill="#000" >i</text>
<text x="11.75" y="662.4" font-family="Liberation Serif" font-size="22.3" font-weight="normal" font-style="italic" fill="#000" >f</text>
<path d="M29.20 645.00 L28.31 645.54 L27.71 646.09 L27.23 646.63 L26.84 647.18 L26.50 647.73 L26.21 648.27 L25.96 648.82 L25.73 649.36 L25.53 649.90 L25.36 650.45 L25.21 651.00 L25.07 651.54 L24.96 652.09 L24.86 652.63 L24.78 653.17 L24.72 653.72 L24.66 654.26 L24.63 654.81 L24.61 655.36 L24.60 655.90 L24.61 656.45 L24.63 656.99 L24.66 657.53 L24.72 658.08 L24.78 658.62 L24.86 659.17 L24.96 659.72 L25.07 660.26 L25.21 660.80 L25.36 661.35 L25.53 661.89 L25.73 662.44 L25.96 662.99 L26.21 663.53 L26.50 664.08 L26.84 664.62 L27.23 665.16 L27.71 665.71 L28.31 666.25 L29.20 666.80 L29.20 666.20 L28.51 665.68 L28.04 665.17 L27.67 664.65 L27.36 664.14 L27.10 663.62 L26.87 663.11 L26.67 662.59 L26.49 662.08 L26.34 661.56 L26.20 661.05 L26.08 660.53 L25.97 660.02 L25.88 659.50 L25.81 658.99 L25.74 658.47 L25.69 657.96 L25.65 657.44 L25.62 656.93 L25.61 656.41 L25.60 655.90 L25.61 655.38 L25.62 654.87 L25.65 654.35 L25.69 653.84 L25.74 653.32 L25.81 652.81 L25.88 652.29 L25.97 651.78 L26.08 651.26 L26.20 650.75 L26.34 650.23 L26.49 649.72 L26.67 649.20 L26.87 648.69 L27.10 648.17 L27.36 647.66 L27.67 647.14 L28.04 646.63 L28.51 646.11 L29.20 645.60 Z" fill="#000"/>
<text x="32.17" y="662.4" font-family="Liberation Serif" font-size="22.3" font-weight="normal" font-style="italic" fill="#000" >x</text>
<path d="M42.60 645.00 L43.49 645.54 L44.09 646.09 L44.57 646.63 L44.96 647.18 L45.30 647.73 L45.59 648.27 L45.84 648.82 L46.07 649.36 L46.27 649.90 L46.44 650.45 L46.59 651.00 L46.73 651.54 L46.84 652.09 L46.94 652.63 L47.02 653.17 L47.08 653.72 L47.14 654.26 L47.17 654.81 L47.19 655.36 L47.20 655.90 L47.19 656.45 L47.17 656.99 L47.14 657.53 L47.08 658.08 L47.02 658.62 L46.94 659.17 L46.84 659.72 L46.73 660.26 L46.59 660.80 L46.44 661.35 L46.27 661.89 L46.07 662.44 L45.84 662.99 L45.59 663.53 L45.30 664.08 L44.96 664.62 L44.57 665.16 L44.09 665.71 L43.49 666.25 L42.60 666.80 L42.60 666.20 L43.29 665.68 L43.76 665.17 L44.13 664.65 L44.44 664.14 L44.70 663.62 L44.93 663.11 L45.13 662.59 L45.31 662.08 L45.46 661.56 L45.60 661.05 L45.72 660.53 L45.83 660.02 L45.92 659.50 L45.99 658.99 L46.06 658.47 L46.11 657.96 L46.15 657.44 L46.18 656.93 L46.19 656.41 L46.20 655.90 L46.19 655.38 L46.18 654.87 L46.15 654.35 L46.11 653.84 L46.06 653.32 L45.99 652.81 L45.92 652.29 L45.83 651.78 L45.72 651.26 L45.60 650.75 L45.46 650.23 L45.31 649.72 L45.13 649.20 L44.93 648.69 L44.70 648.17 L44.44 647.66 L44.13 647.14 L43.76 646.63 L43.29 646.11 L42.60 645.60 Z" fill="#000"/>
<rect x="49.9" y="653.1" width="11.899999999999999" height="1.3" fill="#000" />
<rect x="49.9" y="657.9" width="11.899999999999999" height="1.3" fill="#000" />
<text x="116.59" y="650.8" font-family="Liberation Serif" font-size="20.6" font-weight="normal" font-style="normal" fill="#000" >1</text>
<rect x="66.1" y="656" width="111.8" height="2" fill="#000" />
<text x="66.82" y="677.8" font-family="Liberation Serif" font-size="20.6" font-weight="normal" font-style="italic" fill="#000" >%sigma</text>
<path d="M136.4 670.5 L138.6 669.6 L141.8 676.6 L146.6 659.3 L147.6 659.3 L142.2 678.2 L141.3 678.2 Z" fill="#000"/>
<rect x="147.1" y="659" width="28.7" height="1.9" fill="#000" />
<text x="149.79" y="677.8" font-family="Liberation Serif" font-size="20.6" font-weight="normal" font-style="normal" fill="#000" >2</text>
<text x="162.72" y="678.0" font-family="Liberation Serif" font-size="20.6" font-weight="normal" font-style="normal" fill="#000" >π</text>
<text x="180.70" y="661.4000000000001" font-family="Liberation Serif" font-size="20.6" font-weight="normal" font-style="normal" fill="#000" >e</text>
<rect x="192.1" y="621.9" width="11.7" height="1.3" fill="#000" />
<rect x="208.1" y="622" width="92" height="2" fill="#000" />
<path d="M226.40 597.70 L225.45 598.25 L224.81 598.81 L224.30 599.37 L223.89 599.92 L223.53 600.48 L223.22 601.03 L222.95 601.59 L222.71 602.14 L222.50 602.70 L222.31 603.25 L222.15 603.81 L222.01 604.36 L221.88 604.92 L221.78 605.47 L221.69 606.03 L221.62 606.58 L221.57 607.13 L221.53 607.69 L221.51 608.25 L221.50 608.80 L221.51 609.36 L221.53 609.91 L221.57 610.47 L221.62 611.02 L221.69 611.58 L221.78 612.13 L221.88 612.69 L222.01 613.24 L222.15 613.80 L222.31 614.35 L222.50 614.91 L222.71 615.46 L222.95 616.02 L223.22 616.57 L223.53 617.12 L223.89 617.68 L224.30 618.24 L224.81 618.79 L225.45 619.35 L226.40 619.90 L226.40 619.30 L225.66 618.78 L225.14 618.25 L224.74 617.73 L224.41 617.20 L224.12 616.68 L223.87 616.15 L223.66 615.63 L223.46 615.10 L223.30 614.58 L223.15 614.05 L223.02 613.53 L222.90 613.00 L222.81 612.48 L222.72 611.95 L222.65 611.43 L222.60 610.90 L222.55 610.38 L222.52 609.85 L222.51 609.33 L222.50 608.80 L222.51 608.28 L222.52 607.75 L222.55 607.23 L222.60 606.70 L222.65 606.18 L222.72 605.65 L222.81 605.13 L222.90 604.60 L223.02 604.08 L223.15 603.55 L223.30 603.03 L223.46 602.50 L223.66 601.98 L223.87 601.45 L224.12 600.93 L224.41 600.40 L224.74 599.88 L225.14 599.35 L225.66 598.83 L226.40 598.30 Z" fill="#000"/>
<text x="229.05" y="614.9" font-family="Liberation Serif" font-size="20.6" font-weight="normal" font-style="italic" fill="#000" >x</text>
<rect x="240.5" y="609.3" width="12.4" height="1.2" fill="#000" />
<text x="254.73" y="615.1" font-family="Liberation Serif" font-size="20.6" font-weight="normal" font-style="normal" fill="#000" >μ</text>
<path d="M269.70 597.70 L270.65 598.25 L271.29 598.81 L271.80 599.37 L272.21 599.92 L272.57 600.48 L272.88 601.03 L273.15 601.59 L273.39 602.14 L273.60 602.70 L273.79 603.25 L273.95 603.81 L274.09 604.36 L274.22 604.92 L274.32 605.47 L274.41 606.03 L274.48 606.58 L274.53 607.13 L274.57 607.69 L274.59 608.25 L274.60 608.80 L274.59 609.36 L274.57 609.91 L274.53 610.47 L274.48 611.02 L274.41 611.58 L274.32 612.13 L274.22 612.69 L274.09 613.24 L273.95 613.80 L273.79 614.35 L273.60 614.91 L273.39 615.46 L273.15 616.02 L272.88 616.57 L272.57 617.12 L272.21 617.68 L271.80 618.24 L271.29 618.79 L270.65 619.35 L269.70 619.90 L269.70 619.30 L270.44 618.78 L270.96 618.25 L271.36 617.73 L271.69 617.20 L271.98 616.68 L272.23 616.15 L272.44 615.63 L272.64 615.10 L272.80 614.58 L272.95 614.05 L273.08 613.53 L273.20 613.00 L273.29 612.48 L273.38 611.95 L273.45 611.43 L273.50 610.90 L273.55 610.38 L273.58 609.85 L273.59 609.33 L273.60 608.80 L273.59 608.28 L273.58 607.75 L273.55 607.23 L273.50 606.70 L273.45 606.18 L273.38 605.65 L273.29 605.13 L273.20 604.60 L273.08 604.08 L272.95 603.55 L272.80 603.03 L272.64 602.50 L272.44 601.98 L272.23 601.45 L271.98 600.93 L271.69 600.40 L271.36 599.88 L270.96 599.35 L270.44 598.83 L269.70 598.30 Z" fill="#000"/>
<text x="275.79" y="605.2" font-family="Liberation Serif" font-size="20.6" font-weight="normal" font-style="normal" fill="#000" >2</text>
<text x="208.69" y="652" font-family="Liberation Serif" font-size="20.6" font-weight="normal" font-style="normal" fill="#000" >2</text>
<text x="221.82" y="652" font-family="Liberation Serif" font-size="20.6" font-weight="normal" font-style="italic" fill="#000" >%sigma</text>
<text x="287.89" y="642.2" font-family="Liberation Serif" font-size="20.6" font-weight="normal" font-style="normal" fill="#000" >2</text>
</g>
</svg></body></html>
